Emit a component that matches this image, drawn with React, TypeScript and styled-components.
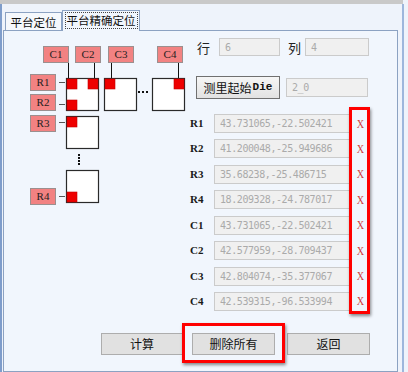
import React from "react";
import styled, { createGlobalStyle } from "styled-components";

const GlobalStyle = createGlobalStyle`
  html, body { margin: 0; padding: 0; background: #eef3fb; }
  body { font-family: "Noto Sans CJK SC", "Liberation Sans", sans-serif; }
  * { box-sizing: border-box; }
`;

const CJK = `"Noto Sans CJK SC", "Liberation Sans", sans-serif`;
const SERIF = `"Liberation Serif", "Noto Sans CJK SC", serif`;
const MONO = `"DejaVu Sans Mono", "Liberation Mono", monospace`;

const Window = styled.div`
  width: 408px;
  height: 372px;
  overflow: hidden;
  background: #eef3fb;
`;

const TopStrip = styled.div`
  width: 403px;
  height: 4px;
  background: #c9c9c9;
`;

const Frame = styled.div`
  width: 404px;
  height: 368px;
  border-left: 2px solid #7f9dcb;
  border-right: 2px solid #9db6dc;
  padding: 6px 4px 0 1px;
  display: flex;
  flex-direction: column;
`;

const TabRow = styled.div`
  display: flex;
  align-items: flex-end;
  height: 21px;
  padding-left: 2px;
  margin-bottom: -1px;
  position: relative;
  z-index: 1;
`;

const Tab = styled.div<{ $active?: boolean }>`
  width: ${(p) => (p.$active ? 78 : 57)}px;
  height: ${(p) => (p.$active ? 21 : 18)}px;
  margin-bottom: ${(p) => (p.$active ? 0 : 1)}px;
  border: 1px solid #8ca2c2;
  border-bottom: none;
  background: ${(p) => (p.$active ? "#f1f6fd" : "#f5f8fc")};
  font-family: ${CJK};
  font-size: 11.5px;
  color: #111;
  display: flex;
  align-items: center;
  justify-content: center;
  padding-bottom: ${(p) => (p.$active ? 1 : 0)}px;
`;

const FocusText = styled.span`
  border: 1px dotted #444;
  padding: 0 1px;
  line-height: 15px;
`;

const Panel = styled.div`
  width: 395px;
  height: 360px;
  border: 1px solid #8ca2c2;
  background: #f1f6fd;
  display: flex;
  flex-direction: column;
`;

const Body = styled.div`
  display: flex;
`;

const Canvas = styled.div`
  position: relative;
  width: 186px;
  height: 180px;
  flex: none;
`;

const Drawing = styled.svg`
  position: absolute;
  left: 0;
  top: 0;
`;

const Node = styled.div`
  position: absolute;
  width: 26px;
  height: 17px;
  background: #f28282;
  border: 1px solid #9b8f8f;
  font-family: ${SERIF};
  font-size: 11px;
  color: #1e1e1e;
  display: flex;
  align-items: center;
  justify-content: center;
  line-height: 1;
`;

const RightCol = styled.div`
  display: flex;
  flex-direction: column;
  width: 190px;
`;

const SizeRow = styled.div`
  display: flex;
  align-items: center;
  height: 18px;
  margin-top: 7px;
`;

const FieldLabel = styled.span<{ $w: number; $ml: number }>`
  width: ${(p) => p.$w}px;
  margin-left: ${(p) => p.$ml}px;
  font-family: ${CJK};
  font-size: 13px;
  color: #222;
  line-height: 1;
`;

const Field = styled.div<{ $w: number; $h?: number }>`
  width: ${(p) => p.$w}px;
  height: ${(p) => p.$h ?? 19}px;
  background: #f0f0f0;
  border: 1px solid #cbcbcb;
  font-family: ${MONO};
  font-size: 10px;
  letter-spacing: -0.42px;
  color: #aaaaaa;
  display: flex;
  align-items: center;
  padding-left: 5px;
  white-space: nowrap;
  overflow: hidden;
`;

const StartRow = styled.div`
  display: flex;
  align-items: center;
  height: 23px;
  margin-top: 20px;
  gap: 6px;
  padding-left: 6px;
`;

const StartButton = styled.button`
  width: 84px;
  height: 23px;
  padding: 0;
  border: 1px solid #707070;
  background: linear-gradient(#f6f6f6, #e2e2e2);
  font-family: "Liberation Mono", ${CJK};
  font-size: 11px;
  font-weight: bold;
  color: #111;
  display: flex;
  align-items: center;
  justify-content: center;
  line-height: 1;
`;

const StartCJK = styled.span`
  font-family: ${CJK};
  font-size: 12px;
  font-weight: normal;
  margin-right: 1px;
`;

const PointList = styled.div`
  position: relative;
  margin-top: 15px;
  display: grid;
  grid-template-columns: 24px 136px 20px;
  grid-auto-rows: 19px;
  row-gap: 6.43px;
  align-items: center;
`;

const PointLabel = styled.span`
  font-family: ${SERIF};
  font-size: 11px;
  font-weight: bold;
  color: #1a1a1a;
  line-height: 1;
`;

const DeleteMark = styled.span`
  font-family: ${SERIF};
  font-size: 12px;
  color: #d03838;
  text-align: center;
  line-height: 1;
  padding-left: 1px;
  transform: scaleX(0.85);
`;

const ColumnHighlight = styled.div`
  position: absolute;
  left: 159px;
  top: -7px;
  width: 21px;
  height: 207px;
  border: 3px solid #ff0000;
  box-shadow: 1px 2px 3px rgba(0, 0, 0, 0.45);
  pointer-events: none;
`;

const ActionRow = styled.div`
  display: flex;
  margin-top: 22px;
  padding-left: 97px;
  height: 22px;
`;

const ActionButton = styled.button<{ $w: number; $ml: number }>`
  width: ${(p) => p.$w}px;
  margin-left: ${(p) => p.$ml}px;
  height: 22px;
  padding: 0;
  border: 1px solid #adadad;
  background: #e1e1e1;
  font-family: ${CJK};
  font-size: 12px;
  color: #111;
  line-height: 1;
`;

const Highlighted = styled.div<{ $ml: number }>`
  position: relative;
  margin-left: ${(p) => p.$ml}px;
  display: flex;
  &::after {
    content: "";
    position: absolute;
    left: -10px;
    right: -10px;
    top: -10px;
    bottom: -8px;
    border: 3px solid #ff0000;
    box-shadow: 1px 2px 3px rgba(0, 0, 0, 0.45);
    pointer-events: none;
  }
`;

const columns = [
  { label: "C1", x: 39 },
  { label: "C2", x: 71 },
  { label: "C3", x: 104 },
  { label: "C4", x: 153 },
];
const rows = [
  { label: "R1", y: 43 },
  { label: "R2", y: 63 },
  { label: "R3", y: 84 },
  { label: "R4", y: 157 },
];

type Sq = { x: number; y: number; marks: ("tl" | "tr" | "bl")[] };
const squares: Sq[] = [
  { x: 62, y: 47, marks: ["tl", "tr", "bl"] },
  { x: 100, y: 47, marks: ["tl"] },
  { x: 148, y: 47, marks: ["tr"] },
  { x: 62, y: 85, marks: ["tl"] },
  { x: 62, y: 139, marks: ["bl"] },
];

const points = [
  ["R1", "43.731065,-22.502421"],
  ["R2", "41.200048,-25.949686"],
  ["R3", "35.68238,-25.486715"],
  ["R4", "18.209328,-24.787017"],
  ["C1", "43.731065,-22.502421"],
  ["C2", "42.577959,-28.709437"],
  ["C3", "42.804074,-35.377067"],
  ["C4", "42.539315,-96.533994"],
];

function DieDiagram() {
  const S = 32;
  return (
    <Canvas>
      <Drawing width={186} height={180} viewBox="0 0 186 180">
        {[64, 90, 107, 174].map((x) => (
          <line key={x} x1={x + 0.5} y1={32} x2={x + 0.5} y2={47} stroke="#111" strokeWidth={1} />
        ))}
        {[51, 73, 91, 165].map((y) => (
          <line key={y} x1={55} y1={y + 0.5} x2={61} y2={y + 0.5} stroke="#555" strokeWidth={1} />
        ))}
        {squares.map((s, i) => (
          <g key={i}>
            <rect x={s.x + 0.5} y={s.y + 0.5} width={S} height={S} fill="#ffffff" stroke="#2a2a2a" strokeWidth={1.2} />
            {s.marks.map((m) => {
              const mx = m === "tr" ? s.x + S - 10 : s.x + 1;
              const my = m === "bl" ? s.y + S - 10 : s.y + 1;
              return <rect key={m} x={mx} y={my} width={10} height={10} fill="#ee0000" stroke="#c40000" strokeWidth={0.6} />;
            })}
          </g>
        ))}
        {[134, 138, 142].map((x) => (
          <rect key={x} x={x} y={60} width={2} height={2} fill="#111" />
        ))}
        {[123, 126, 129, 132].map((y) => (
          <rect key={y} x={74} y={y} width={2} height={2} fill="#111" />
        ))}
      </Drawing>
      {columns.map((c) => (
        <Node key={c.label} style={{ left: c.x, top: 15 }}>
          {c.label}
        </Node>
      ))}
      {rows.map((r) => (
        <Node key={r.label} style={{ left: 26, top: r.y }}>
          {r.label}
        </Node>
      ))}
    </Canvas>
  );
}

export default function App() {
  return (
    <>
      <GlobalStyle />
      <Window>
        <TopStrip />
        <Frame>
          <TabRow>
            <Tab>平台定位</Tab>
            <Tab $active>
              <FocusText>平台精确定位</FocusText>
            </Tab>
          </TabRow>
          <Panel>
            <Body>
              <DieDiagram />
              <RightCol>
                <SizeRow>
                  <FieldLabel $w={22} $ml={7}>行</FieldLabel>
                  <Field $w={61} $h={18}>6</Field>
                  <FieldLabel $w={17} $ml={8}>列</FieldLabel>
                  <Field $w={64} $h={18}>4</Field>
                </SizeRow>
                <StartRow>
                  <StartButton>
                    <StartCJK>测里起始</StartCJK>Die
                  </StartButton>
                  <Field $w={82}>2_0</Field>
                </StartRow>
                <PointList>
                  {points.map(([label, value]) => (
                    <React.Fragment key={label}>
                      <PointLabel>{label}</PointLabel>
                      <Field $w={136}>{value}</Field>
                      <DeleteMark>X</DeleteMark>
                    </React.Fragment>
                  ))}
                  <ColumnHighlight />
                </PointList>
              </RightCol>
            </Body>
            <ActionRow>
              <ActionButton $w={82} $ml={0}>计算</ActionButton>
              <Highlighted $ml={9}>
                <ActionButton $w={83} $ml={0}>删除所有</ActionButton>
              </Highlighted>
              <ActionButton $w={83} $ml={12}>返回</ActionButton>
            </ActionRow>
          </Panel>
        </Frame>
      </Window>
    </>
  );
}
